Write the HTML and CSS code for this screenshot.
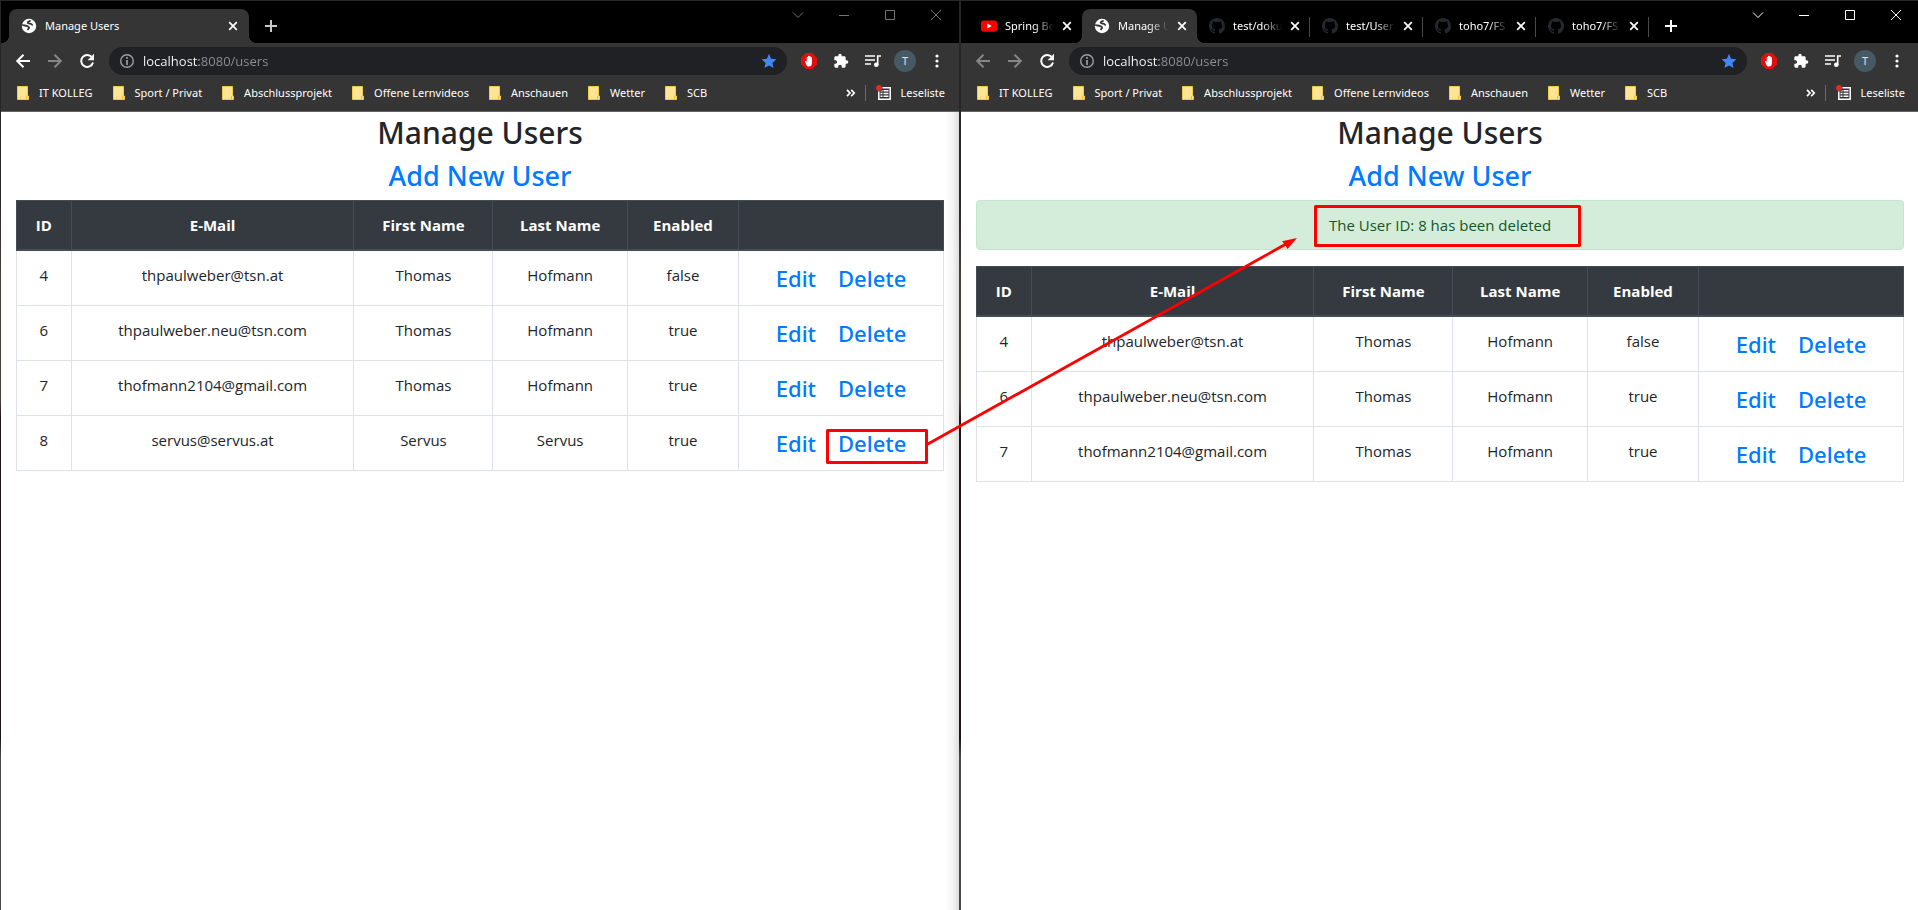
FILE: index.html
```html
<!DOCTYPE html>
<html lang="de">
<head>
<meta charset="utf-8">
<meta name="viewport" content="width=device-width, initial-scale=1">
<title>Manage Users</title>
<link rel="stylesheet" href="styles.css">
</head>
<body>
<svg class="sprite" aria-hidden="true">
  <symbol id="i-globe" viewBox="0 0 16 16"><circle cx="8" cy="8" r="7.2" fill="#fff"/><path d="M1.200 6.600c1.300 1.300 3 .6 4.300 1.300 1.300.7 2.700.6 2.600 1.700-.1 1.100-1.100 1-1.300 2.600M9.600 2.400c-.6 1.200-2.700.9-2.900 2.200 0 1.200 1.500.9 2.600 1 1.100.2 1 1.300 2.600 1.200" fill="none" stroke="#353535" stroke-width="1.800"/></symbol>
  <symbol id="i-x" viewBox="0 0 10 10"><path d="M1.200 1.200l7.600 7.600M8.800 1.200L1.200 8.800" stroke="currentColor" stroke-width="1.700"/></symbol>
  <symbol id="i-plus" viewBox="0 0 12 12"><path d="M6 0v12M0 6h12" stroke="currentColor" stroke-width="2"/></symbol>
  <symbol id="i-chev" viewBox="0 0 12 12"><path d="M1 3.500l5 5 5-5" fill="none" stroke="currentColor"/></symbol>
  <symbol id="i-min" viewBox="0 0 12 12"><path d="M1 6.500h10" stroke="currentColor"/></symbol>
  <symbol id="i-max" viewBox="0 0 12 12"><path d="M1.500 1.500h9v9h-9z" fill="none" stroke="currentColor"/></symbol>
  <symbol id="i-close" viewBox="0 0 12 12"><path d="M1 1l10 10M11 1L1 11" stroke="currentColor"/></symbol>
  <symbol id="i-back" viewBox="0 0 16 16"><path d="M15 8H2.500M8.500 1.700L2.200 8l6.300 6.300" fill="none" stroke="currentColor" stroke-width="2"/></symbol>
  <symbol id="i-fwd" viewBox="0 0 16 16"><path d="M1 8h12.500M7.500 1.700L13.800 8l-6.300 6.300" fill="none" stroke="currentColor" stroke-width="2"/></symbol>
  <symbol id="i-reload" viewBox="0 0 16 16"><path d="M13.200 4.600A6 6 0 1 0 14 9.500" fill="none" stroke="currentColor" stroke-width="2"/><path d="M15 .8v6.400H8.600z" fill="currentColor"/></symbol>
  <symbol id="i-info" viewBox="0 0 16 16"><circle cx="8" cy="8" r="6.300" fill="none" stroke="#9aa0a6" stroke-width="1.400"/><path d="M8 4v1.800M8 7v5" stroke="#9aa0a6" stroke-width="1.700"/></symbol>
  <symbol id="i-star" viewBox="0 0 16 16"><path d="M8 .8l2.100 5 5.300.5-4 3.600 1.200 5.200L8 12.400l-4.600 2.700 1.200-5.200-4-3.600 5.300-.5z" fill="#4285f4"/></symbol>
  <symbol id="i-abp" viewBox="0 0 16 16"><path d="M4.700 0h6.600L16 4.700v6.600L11.300 16H4.700L0 11.300V4.700z" fill="#e40d0d"/><path d="M4 8.300c0-.8 1.200-.9 1.500 0l.3.900V4.300c0-.9 1.200-.9 1.200 0V3.300c0-.9 1.300-.9 1.300 0v.4c0-.9 1.300-.9 1.300 0v1c0-.9 1.300-.9 1.300 0V10c0 2.300-1 3.600-3 3.600S5.300 12.200 4 8.300z" fill="#fff"/></symbol>
  <symbol id="i-puzzle" viewBox="0 0 24 24"><path d="M20.500 11H19V7c0-1.100-.9-2-2-2h-4V3.500a2.500 2.500 0 0 0-5 0V5H4c-1.100 0-2 .9-2 2v3.800h1.500a2.700 2.700 0 0 1 0 5.400H2V20c0 1.100.9 2 2 2h3.800v-1.500a2.700 2.700 0 0 1 5.400 0V22H17c1.100 0 2-.9 2-2v-4h1.500a2.500 2.500 0 0 0 0-5z" fill="#fff"/></symbol>
  <symbol id="i-queue" viewBox="0 0 16 14"><path d="M0 2h10M0 6h10M0 10h6M12.700 11V2H16" fill="none" stroke="#fff" stroke-width="1.600"/><circle cx="11.300" cy="10.700" r="2.300" fill="#fff"/></symbol>
  <symbol id="i-dots" viewBox="0 0 4 14"><circle cx="2" cy="2" r="1.600" fill="#fff"/><circle cx="2" cy="7" r="1.600" fill="#fff"/><circle cx="2" cy="12" r="1.600" fill="#fff"/></symbol>
  <symbol id="i-folder" viewBox="0 0 12 14"><path d="M.5.5h10v9.500h1v3.500H.5z" fill="#ffe591" stroke="#f2cb4d"/><path d="M9.500 13.500V10h1" fill="none" stroke="#e9bd3a"/></symbol>
  <symbol id="i-more" viewBox="0 0 10 8"><path d="M1 .8L4 4 1 7.200M5.200.8L8.200 4l-3 3.200" fill="none" stroke="#fff" stroke-width="1.700"/></symbol>
  <symbol id="i-list" viewBox="0 0 16 16"><path d="M2.800 2.800h11.400v11.400H2.800z" fill="none" stroke="#fff" stroke-width="1.500"/><path d="M4.500 5.700h2M7.500 5.700h5M4.500 8.500h2M7.500 8.500h5M4.500 11.300h2M7.500 11.300h5" stroke="#fff" stroke-width="1.600"/><circle cx="3" cy="3" r="3.600" fill="#353535"/><circle cx="3" cy="3" r="3" fill="#d93025"/></symbol>
  <symbol id="i-yt" viewBox="0 0 16 16"><rect y="2.400" width="16" height="11.400" rx="2.800" fill="red"/><path d="M6.400 5.600v5L10.700 8z" fill="#fff"/></symbol>
  <symbol id="i-gh" viewBox="0 0 16 16"><path fill="#24292e" d="M8 0C3.580 0 0 3.580 0 8c0 3.540 2.290 6.530 5.470 7.590.4.070.55-.17.55-.38 0-.19-.01-.82-.01-1.490-2.010.37-2.530-.49-2.690-.94-.09-.23-.48-.94-.82-1.130-.28-.15-.68-.52-.01-.53.63-.01 1.080.58 1.230.82.72 1.210 1.870.87 2.330.66.07-.52.28-.87.51-1.070-1.780-.2-3.640-.89-3.640-3.950 0-.87.31-1.590.82-2.150-.08-.2-.36-1.020.08-2.120 0 0 .67-.21 2.200.82A7.700 7.700 0 0 1 8 3.860c.68 0 1.360.09 2 .27 1.530-1.040 2.200-.82 2.200-.82.44 1.100.16 1.920.08 2.120.51.56.82 1.270.82 2.150 0 3.070-1.870 3.750-3.650 3.950.29.25.54.73.54 1.480 0 1.070-.01 1.930-.01 2.200 0 .21.15.46.55.38A8.010 8.010 0 0 0 16 8c0-4.420-3.580-8-8-8z"/></symbol>
</svg>

<main class="desktop">
  <section class="window inactive" aria-label="Browser, vor dem Löschen">
    <header class="chrome">
      <div class="strip">
        <div class="tabs">
          <div class="tab active wide"><svg class="s16"><use href="#i-globe"/></svg><span class="label">Manage Users</span><button class="x" aria-label="Tab schließen"><svg class="s10"><use href="#i-x"/></svg></button></div>
          <button class="new" aria-label="Neuer Tab"><svg class="s12"><use href="#i-plus"/></svg></button>
        </div>
        <div class="controls">
          <button aria-label="Tabs durchsuchen"><svg class="s12"><use href="#i-chev"/></svg></button>
          <button aria-label="Minimieren"><svg class="s12"><use href="#i-min"/></svg></button>
          <button aria-label="Maximieren"><svg class="s12"><use href="#i-max"/></svg></button>
          <button aria-label="Schließen"><svg class="s12"><use href="#i-close"/></svg></button>
        </div>
      </div>
      <div class="toolbar">
        <button aria-label="Zurück"><svg class="s16"><use href="#i-back"/></svg></button>
        <button class="off" aria-label="Vorwärts"><svg class="s16"><use href="#i-fwd"/></svg></button>
        <button aria-label="Neu laden"><svg class="s16"><use href="#i-reload"/></svg></button>
        <div class="omnibox"><svg class="s16"><use href="#i-info"/></svg><input type="text" aria-label="Adresse" value="localhost:8080/users"><button class="star" aria-label="Lesezeichen"><svg class="s16"><use href="#i-star"/></svg></button></div>
        <button aria-label="Werbeblocker"><svg class="s16"><use href="#i-abp"/></svg></button>
        <button aria-label="Erweiterungen"><svg class="s16"><use href="#i-puzzle"/></svg></button>
        <button aria-label="Medien"><svg class="s16"><use href="#i-queue"/></svg></button>
        <button aria-label="Profil"><span class="avatar">T</span></button>
        <button aria-label="Menü"><svg class="s14"><use href="#i-dots"/></svg></button>
      </div>
      <nav class="bookmarks" aria-label="Lesezeichen">
        <a href="#"><svg class="fold"><use href="#i-folder"/></svg>IT KOLLEG</a>
        <a href="#"><svg class="fold"><use href="#i-folder"/></svg>Sport / Privat</a>
        <a href="#"><svg class="fold"><use href="#i-folder"/></svg>Abschlussprojekt</a>
        <a href="#"><svg class="fold"><use href="#i-folder"/></svg>Offene Lernvideos</a>
        <a href="#"><svg class="fold"><use href="#i-folder"/></svg>Anschauen</a>
        <a href="#"><svg class="fold"><use href="#i-folder"/></svg>Wetter</a>
        <a href="#"><svg class="fold"><use href="#i-folder"/></svg>SCB</a>
        <button class="more" aria-label="Weitere Lesezeichen"><svg class="s10"><use href="#i-more"/></svg></button>
        <button class="reading"><svg class="s16"><use href="#i-list"/></svg>Leseliste</button>
      </nav>
    </header>
    <div class="page">
      <h1>Manage Users</h1>
      <h2><a href="#">Add New User</a></h2>
      <table>
        <colgroup><col class="c-id"><col class="c-mail"><col class="c-first"><col class="c-last"><col class="c-on"><col class="c-act"></colgroup>
        <thead><tr><th>ID</th><th>E-Mail</th><th>First Name</th><th>Last Name</th><th>Enabled</th><th></th></tr></thead>
        <tbody>
          <tr><td>4</td><td>thpaulweber@tsn.at</td><td>Thomas</td><td>Hofmann</td><td>false</td><td class="act"><a href="#">Edit</a><a href="#">Delete</a></td></tr>
          <tr><td>6</td><td>thpaulweber.neu@tsn.com</td><td>Thomas</td><td>Hofmann</td><td>true</td><td class="act"><a href="#">Edit</a><a href="#">Delete</a></td></tr>
          <tr><td>7</td><td>thofmann2104@gmail.com</td><td>Thomas</td><td>Hofmann</td><td>true</td><td class="act"><a href="#">Edit</a><a href="#">Delete</a></td></tr>
          <tr><td>8</td><td>servus@servus.at</td><td>Servus</td><td>Servus</td><td>true</td><td class="act"><a href="#">Edit</a><a href="#">Delete</a></td></tr>
        </tbody>
      </table>
    </div>
  </section>

  <section class="window" aria-label="Browser, nach dem Löschen">
    <header class="chrome">
      <div class="strip">
        <div class="tabs">
          <div class="tab"><svg class="s16"><use href="#i-yt"/></svg><span class="label">Spring Bo</span><button class="x" aria-label="Tab schließen"><svg class="s10"><use href="#i-x"/></svg></button></div>
          <div class="tab active"><svg class="s16"><use href="#i-globe"/></svg><span class="label">Manage U</span><button class="x" aria-label="Tab schließen"><svg class="s10"><use href="#i-x"/></svg></button></div>
          <div class="tab line"><svg class="s16"><use href="#i-gh"/></svg><span class="label">test/doku</span><button class="x" aria-label="Tab schließen"><svg class="s10"><use href="#i-x"/></svg></button></div>
          <div class="tab line"><svg class="s16"><use href="#i-gh"/></svg><span class="label">test/User</span><button class="x" aria-label="Tab schließen"><svg class="s10"><use href="#i-x"/></svg></button></div>
          <div class="tab line"><svg class="s16"><use href="#i-gh"/></svg><span class="label">toho7/FS</span><button class="x" aria-label="Tab schließen"><svg class="s10"><use href="#i-x"/></svg></button></div>
          <div class="tab line"><svg class="s16"><use href="#i-gh"/></svg><span class="label">toho7/FS</span><button class="x" aria-label="Tab schließen"><svg class="s10"><use href="#i-x"/></svg></button></div>
          <button class="new" aria-label="Neuer Tab"><svg class="s12"><use href="#i-plus"/></svg></button>
        </div>
        <div class="controls">
          <button aria-label="Tabs durchsuchen"><svg class="s12"><use href="#i-chev"/></svg></button>
          <button aria-label="Minimieren"><svg class="s12"><use href="#i-min"/></svg></button>
          <button aria-label="Maximieren"><svg class="s12"><use href="#i-max"/></svg></button>
          <button aria-label="Schließen"><svg class="s12"><use href="#i-close"/></svg></button>
        </div>
      </div>
      <div class="toolbar">
        <button class="off" aria-label="Zurück"><svg class="s16"><use href="#i-back"/></svg></button>
        <button class="off" aria-label="Vorwärts"><svg class="s16"><use href="#i-fwd"/></svg></button>
        <button aria-label="Neu laden"><svg class="s16"><use href="#i-reload"/></svg></button>
        <div class="omnibox"><svg class="s16"><use href="#i-info"/></svg><input type="text" aria-label="Adresse" value="localhost:8080/users"><button class="star" aria-label="Lesezeichen"><svg class="s16"><use href="#i-star"/></svg></button></div>
        <button aria-label="Werbeblocker"><svg class="s16"><use href="#i-abp"/></svg></button>
        <button aria-label="Erweiterungen"><svg class="s16"><use href="#i-puzzle"/></svg></button>
        <button aria-label="Medien"><svg class="s16"><use href="#i-queue"/></svg></button>
        <button aria-label="Profil"><span class="avatar">T</span></button>
        <button aria-label="Menü"><svg class="s14"><use href="#i-dots"/></svg></button>
      </div>
      <nav class="bookmarks" aria-label="Lesezeichen">
        <a href="#"><svg class="fold"><use href="#i-folder"/></svg>IT KOLLEG</a>
        <a href="#"><svg class="fold"><use href="#i-folder"/></svg>Sport / Privat</a>
        <a href="#"><svg class="fold"><use href="#i-folder"/></svg>Abschlussprojekt</a>
        <a href="#"><svg class="fold"><use href="#i-folder"/></svg>Offene Lernvideos</a>
        <a href="#"><svg class="fold"><use href="#i-folder"/></svg>Anschauen</a>
        <a href="#"><svg class="fold"><use href="#i-folder"/></svg>Wetter</a>
        <a href="#"><svg class="fold"><use href="#i-folder"/></svg>SCB</a>
        <button class="more" aria-label="Weitere Lesezeichen"><svg class="s10"><use href="#i-more"/></svg></button>
        <button class="reading"><svg class="s16"><use href="#i-list"/></svg>Leseliste</button>
      </nav>
    </header>
    <div class="page">
      <h1>Manage Users</h1>
      <h2><a href="#">Add New User</a></h2>
      <p class="alert" role="status">The User ID: 8 has been deleted</p>
      <table>
        <colgroup><col class="c-id"><col class="c-mail"><col class="c-first"><col class="c-last"><col class="c-on"><col class="c-act"></colgroup>
        <thead><tr><th>ID</th><th>E-Mail</th><th>First Name</th><th>Last Name</th><th>Enabled</th><th></th></tr></thead>
        <tbody>
          <tr><td>4</td><td>thpaulweber@tsn.at</td><td>Thomas</td><td>Hofmann</td><td>false</td><td class="act"><a href="#">Edit</a><a href="#">Delete</a></td></tr>
          <tr><td>6</td><td>thpaulweber.neu@tsn.com</td><td>Thomas</td><td>Hofmann</td><td>true</td><td class="act"><a href="#">Edit</a><a href="#">Delete</a></td></tr>
          <tr><td>7</td><td>thofmann2104@gmail.com</td><td>Thomas</td><td>Hofmann</td><td>true</td><td class="act"><a href="#">Edit</a><a href="#">Delete</a></td></tr>
        </tbody>
      </table>
    </div>
  </section>

  <svg class="marks" viewBox="0 0 1918 910" aria-hidden="true">
    <g fill="none" stroke="red" stroke-width="3" stroke-linejoin="round">
      <rect x="827.500" y="430.500" width="99" height="32"/>
      <rect x="1315.500" y="206.500" width="264" height="39"/>
      <path d="M927 444.500L1286 244" stroke-width="2.800"/>
    </g>
    <path d="M1297 238L1282 241.200L1285 244.500L1287.500 249z" fill="red"/>
  </svg>
</main>
</body>
</html>
```

FILE: styles.css
```css
* { box-sizing: border-box; }

body {
  margin: 0;
  overflow: hidden;
  background: #fff;
  color: #212529;
  font: 15px/24px "Open Sans", "Noto Sans", sans-serif;
}

.sprite { display: none; }
svg { display: block; flex: none; }
.s10 { width: 10px; height: 10px; }
.s12 { width: 12px; height: 12px; }
.s14 { width: 14px; height: 14px; }
.s16 { width: 16px; height: 16px; }
.fold { width: 12px; height: 14px; }

button {
  display: flex;
  align-items: center;
  justify-content: center;
  padding: 0;
  border: 0;
  background: none;
  color: inherit;
  font: inherit;
}

a { color: #007bff; text-decoration: none; }

.desktop {
  position: relative;
  display: grid;
  grid-template-columns: repeat(2, calc(50% + 1px));
  min-height: 100vh;
  overflow: hidden;
}

.window {
  display: flex;
  flex-direction: column;
  min-width: 0;
  border: 1px solid #2b2727;
  border-bottom: 0;
  border-image: linear-gradient(#2b2727 22%, #453f3b 30%, #453f3b 44%, #1d1517 46%, #1d1517 81%, #484848 83%) 1;
  background: #fff;
}

/* Browser frame */
.chrome {
  background: #353535;
  border-bottom: 1px solid #636363;
  color: #fff;
  font: 11px/24px "Noto Sans", "Open Sans", sans-serif;
}

.strip {
  display: flex;
  justify-content: space-between;
  height: 42px;
  background: #000;
}

.tabs { display: flex; align-items: flex-end; padding-left: 8px; }

.tab {
  position: relative;
  display: flex;
  align-items: center;
  gap: 8px;
  width: 113px;
  height: 34px;
  padding: 0 10px 0 12px;
}

.tab.active { width: 115px; background: #353535; border-radius: 8px 8px 0 0; }
.tab.wide { width: 240px; padding-right: 11px; }

.tab.active::before,
.tab.active::after {
  content: "";
  position: absolute;
  bottom: 0;
  width: 8px;
  height: 8px;
}

.tab.active::before { right: 100%; background: radial-gradient(circle at 0 0, transparent 8px, #353535 8px); }
.tab.active::after { left: 100%; background: radial-gradient(circle at 100% 0, transparent 8px, #353535 8px); }

.tab.line::after {
  content: "";
  position: absolute;
  right: 0;
  top: 8px;
  width: 1px;
  height: 20px;
  background: #4a4a4a;
}

.label {
  flex: 1;
  min-width: 0;
  white-space: nowrap;
  mask-image: linear-gradient(to right, #000 60%, transparent);
}

.wide .label { mask-image: none; }
.new { width: 44px; height: 34px; }
.inactive .new { color: #c8c8c8; }

.controls { display: flex; }
.controls button { width: 46px; height: 28px; }
.inactive .controls { color: #747474; }

.toolbar {
  display: flex;
  align-items: center;
  height: 36px;
  padding: 0 6px;
}

.toolbar > button { width: 32px; height: 32px; }
.toolbar .off { color: #868686; }

.omnibox {
  display: flex;
  flex: 1;
  align-items: center;
  height: 28px;
  margin: 0 6px;
  padding: 0 10px;
  border-radius: 14px;
  background: #202124;
}

.omnibox input {
  flex: 1;
  min-width: 0;
  height: 24px;
  margin: 0 8px;
  padding: 0;
  border: 0;
  outline: 0;
  background: linear-gradient(to right, #fff 56px, #8d9196 56px) text;
  color: transparent;
  font: 13px/24px "Open Sans", "Noto Sans", sans-serif;
}

.avatar {
  width: 22px;
  border-radius: 50%;
  background: #455a64;
  color: #e0e4e6;
  line-height: 22px;
}

.bookmarks {
  display: flex;
  align-items: center;
  gap: 20px;
  height: 32px;
  padding: 0 14px 4px 16px;
}

.bookmarks a {
  display: flex;
  align-items: center;
  gap: 10px;
  color: #fff;
  white-space: nowrap;
}

.more { margin-left: auto; }

.reading {
  gap: 8px;
  height: 16px;
  margin-left: -11px;
  padding-left: 10px;
  border-left: 1px solid #6a6a6a;
}

/* User administration page */
.page {
  flex: 1;
  padding: 0 15px;
  text-align: center;
}

.inactive .page { background: linear-gradient(to left, #dcdcdc, #f4f4f4 6px, #fff 15px); }

h1, h2 {
  margin: 0;
  font-family: "Noto Sans", "Open Sans", sans-serif;
  font-weight: 500;
}

h1 { font-size: 30px; line-height: 42px; }
h2 { padding-bottom: 2px; font-size: 27px; line-height: 44px; }

.alert {
  margin: 0 0 16px;
  padding: 12px 20px;
  border: 1px solid #c3e6cb;
  border-radius: 4px;
  background: #d4edda;
  color: #155724;
}

table {
  width: 100%;
  border-collapse: collapse;
  table-layout: fixed;
  background: #fff;
}

.c-id { width: 5.9%; }
.c-mail { width: 30.5%; }
.c-first { width: 15%; }
.c-last { width: 14.5%; }
.c-on { width: 12%; }
.c-act { width: 22.1%; }

th, td {
  padding: 12px 0;
  border: 1px solid #dee2e6;
  vertical-align: top;
}

th {
  border-color: #454d55;
  border-bottom-width: 2px;
  background: #343a40;
  color: #fff;
  font-weight: 700;
}

.act {
  font: 500 22px/30px "Noto Sans", "Open Sans", sans-serif;
}

.act a + a { margin-left: 22px; }

/* Hand-drawn callouts lying over both windows */
.marks {
  position: absolute;
  top: 0;
  left: 0;
  width: 100%;
  pointer-events: none;
}
```
